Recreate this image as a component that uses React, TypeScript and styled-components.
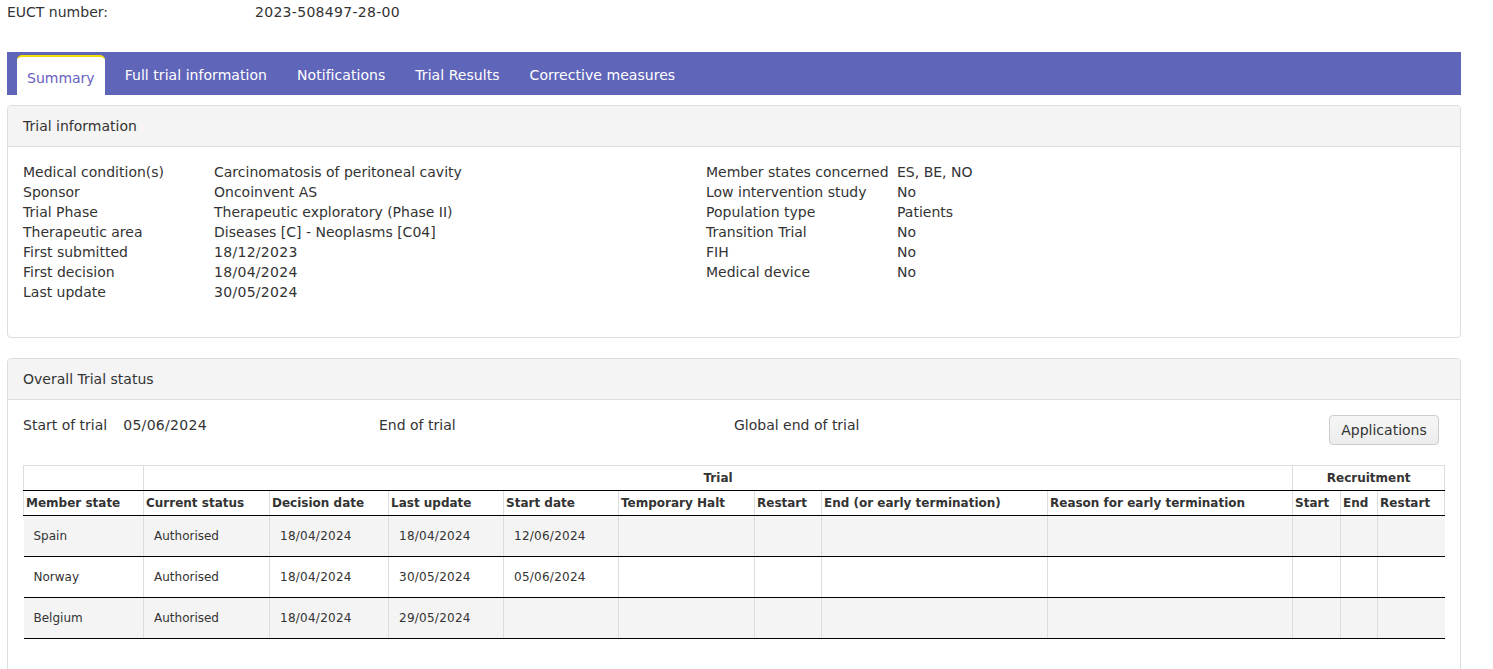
import React from "react";
import styled, { createGlobalStyle } from "styled-components";

const Global = createGlobalStyle`
  html, body { margin: 0; padding: 0; height: 669px; overflow: hidden; background: #fff; }
  body { font-family: "DejaVu Sans", Verdana, sans-serif; font-size: 14px; color: #333; }
`;
const Page = styled.div`
  width: 1454px;
  margin-left: 7px;
`;
const EuctRow = styled.div`
  display: flex;
  height: 52px;
  padding-top: 2px;
  box-sizing: border-box;
  line-height: 20px;
`;
const EuctLabel = styled.span`
  width: 248px;
`;
const Numeric = styled.span`
  letter-spacing: 0.3px;
`;
const TabBar = styled.nav`
  display: flex;
  align-items: flex-end;
  height: 43px;
  padding-left: 10px;
  background: #5f65b9;
`;
const Tab = styled.a<{ $active?: boolean }>`
  box-sizing: border-box;
  height: ${(p) => (p.$active ? "40px" : "43px")};
  padding: 0 ${(p) => (p.$active ? "10px" : "15px")};
  line-height: ${(p) => (p.$active ? "42px" : "47px")};
  letter-spacing: ${(p) => (p.$active ? "normal" : "0.05px")};
  margin-right: ${(p) => (p.$active ? "5px" : "0")};
  color: ${(p) => (p.$active ? "#6a60c0" : "#fff")};
  background: ${(p) => (p.$active ? "#fff" : "transparent")};
  border-top: ${(p) => (p.$active ? "2px solid #f3dc00" : "none")};
  border-radius: ${(p) => (p.$active ? "5px 5px 0 0" : "0")};
`;
const Panel = styled.section<{ $height: number; $top: number }>`
  box-sizing: border-box;
  height: ${(p) => p.$height}px;
  margin-top: ${(p) => p.$top}px;
  border: 1px solid #ddd;
  border-radius: 4px;
  background: #fff;
`;
const PanelHeader = styled.header`
  box-sizing: border-box;
  height: 41px;
  padding: 0 15px;
  line-height: 40px;
  background: #f4f4f4;
  border-bottom: 1px solid #ddd;
  border-radius: 3px 3px 0 0;
`;
const InfoBody = styled.div`
  display: grid;
  grid-template-columns: 683px 1fr;
  padding: 15px;
`;
const InfoList = styled.dl<{ $labelWidth: number }>`
  display: grid;
  grid-template-columns: ${(p) => p.$labelWidth}px 1fr;
  grid-auto-rows: 20px;
  margin: 0;
  line-height: 20px;
`;
const Term = styled.dt`
  white-space: nowrap;
`;
const Value = styled.dd`
  margin: 0;
  white-space: nowrap;
`;
const StatusBody = styled.div`
  padding: 15px 15px 0;
`;
const DatesRow = styled.div`
  display: flex;
  height: 50px;
  padding-right: 6px;
  box-sizing: border-box;
  align-items: flex-start;
`;
const DateItem = styled.span<{ $width: number }>`
  width: ${(p) => p.$width}px;
  line-height: 20px;
  flex: none;
  white-space: nowrap;
`;
const DateValue = styled(Numeric)`
  margin-left: 16px;
`;
const Button = styled.button`
  box-sizing: border-box;
  width: 110px;
  height: 30px;
  margin-left: auto;
  padding: 0;
  font: inherit;
  color: #333;
  background: linear-gradient(#f6f6f6, #ececec);
  border: 1px solid #ccc;
  border-radius: 4px;
`;
const Table = styled.table`
  width: 1421px;
  table-layout: fixed;
  border-collapse: collapse;
  font-size: 12px;
`;
const GroupCell = styled.th`
  height: 24px;
  padding: 0;
  font-weight: 700;
  text-align: center;
  border: 1px solid #ddd;
  border-bottom: 1px solid #000;
`;
const HeadCell = styled.th`
  height: 25px;
  box-sizing: border-box;
  padding: 0 2px;
  font-weight: 700;
  text-align: left;
  white-space: nowrap;
  border-left: 1px solid #ddd;
  border-right: 1px solid #ddd;
  border-bottom: 1px solid #000;
`;
const Row = styled.tr<{ $shaded: boolean }>`
  background: ${(p) => (p.$shaded ? "#f4f4f4" : "#fff")};
`;
const Cell = styled.td<{ $numeric?: boolean }>`
  height: 41px;
  box-sizing: border-box;
  padding: 0 10px;
  white-space: nowrap;
  letter-spacing: ${(p) => (p.$numeric ? "0.25px" : "normal")};
  border-left: 1px solid #ddd;
  border-right: 1px solid #ddd;
  border-bottom: 1px solid #000;
  &:first-child { border-left: none; }
  &:last-child { border-right: none; }
`;

const leftInfo = [
  ["Medical condition(s)", "Carcinomatosis of peritoneal cavity"],
  ["Sponsor", "Oncoinvent AS"],
  ["Trial Phase", "Therapeutic exploratory (Phase II)"],
  ["Therapeutic area", "Diseases [C] - Neoplasms [C04]"],
  ["First submitted", "18/12/2023"],
  ["First decision", "18/04/2024"],
  ["Last update", "30/05/2024"],
];
const rightInfo = [
  ["Member states concerned", "ES, BE, NO"],
  ["Low intervention study", "No"],
  ["Population type", "Patients"],
  ["Transition Trial", "No"],
  ["FIH", "No"],
  ["Medical device", "No"],
];
const columns: [string, number][] = [
  ["Member state", 120],
  ["Current status", 126],
  ["Decision date", 119],
  ["Last update", 115],
  ["Start date", 115],
  ["Temporary Halt", 136],
  ["Restart", 67],
  ["End (or early termination)", 226],
  ["Reason for early termination", 245],
  ["Start", 48],
  ["End", 37],
  ["Restart", 67],
];
const rows = [
  ["Spain", "Authorised", "18/04/2024", "18/04/2024", "12/06/2024"],
  ["Norway", "Authorised", "18/04/2024", "30/05/2024", "05/06/2024"],
  ["Belgium", "Authorised", "18/04/2024", "29/05/2024", ""],
];

const isDate = (s: string) => /^\d\d\/\d\d\/\d{4}$/.test(s);

function Info({ items, labelWidth }: { items: string[][]; labelWidth: number }) {
  return (
    <InfoList $labelWidth={labelWidth}>
      {items.map(([k, v]) => (
        <React.Fragment key={k}>
          <Term>{k}</Term>
          <Value>{isDate(v) ? <Numeric>{v}</Numeric> : v}</Value>
        </React.Fragment>
      ))}
    </InfoList>
  );
}

export default function App() {
  return (
    <Page>
      <Global />
      <EuctRow>
        <EuctLabel>EUCT number:</EuctLabel>
        <Numeric>2023-508497-28-00</Numeric>
      </EuctRow>
      <TabBar>
        <Tab $active>Summary</Tab>
        <Tab>Full trial information</Tab>
        <Tab>Notifications</Tab>
        <Tab>Trial Results</Tab>
        <Tab>Corrective measures</Tab>
      </TabBar>
      <Panel $height={233} $top={10}>
        <PanelHeader>Trial information</PanelHeader>
        <InfoBody>
          <Info items={leftInfo} labelWidth={191} />
          <Info items={rightInfo} labelWidth={191} />
        </InfoBody>
      </Panel>
      <Panel $height={340} $top={20}>
        <PanelHeader>Overall Trial status</PanelHeader>
        <StatusBody>
          <DatesRow>
            <DateItem $width={356}>
              Start of trial<DateValue>05/06/2024</DateValue>
            </DateItem>
            <DateItem $width={355}>End of trial</DateItem>
            <DateItem $width={300}>Global end of trial</DateItem>
            <Button>Applications</Button>
          </DatesRow>
          <Table>
            <colgroup>
              {columns.map(([name, w]) => (
                <col key={name + w} width={w} />
              ))}
            </colgroup>
            <thead>
              <tr>
                <GroupCell />
                <GroupCell colSpan={8}>Trial</GroupCell>
                <GroupCell colSpan={3}>Recruitment</GroupCell>
              </tr>
              <tr>
                {columns.map(([name, w]) => (
                  <HeadCell key={name + w}>{name}</HeadCell>
                ))}
              </tr>
            </thead>
            <tbody>
              {rows.map((r, i) => (
                <Row key={r[0]} $shaded={i % 2 === 0}>
                  {columns.map(([name, w], c) => (
                    <Cell key={name + w} $numeric={isDate(r[c] ?? "")}>
                      {r[c] ?? ""}
                    </Cell>
                  ))}
                </Row>
              ))}
            </tbody>
          </Table>
        </StatusBody>
      </Panel>
    </Page>
  );
}
